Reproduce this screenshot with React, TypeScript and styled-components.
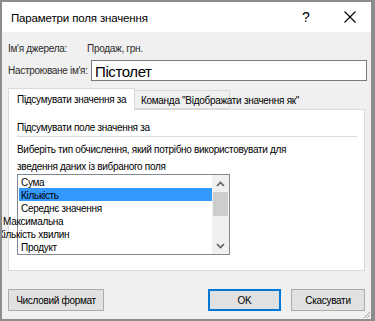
import React from 'react';
import styled, { createGlobalStyle } from 'styled-components';

const Global = createGlobalStyle`
  html, body { margin: 0; padding: 0; background: #f0f0f0; }
  body {
    font-family: "Liberation Sans", Arial, sans-serif;
    font-size: 10px;
    letter-spacing: -0.3px;
    white-space: nowrap;
    color: #000;
  }
`;

const Window = styled.div`
  box-sizing: border-box;
  width: 375px;
  height: 321px;
  border: 2px solid #8c8c8c;
  border-right-width: 4px;
  background: #f0f0f0;
  display: flex;
  flex-direction: column;
  position: relative;
  overflow: hidden;
`;

const TitleBar = styled.div`
  height: 30px;
  background: #fff;
  display: flex;
  align-items: center;
  padding-left: 9px;
  flex-shrink: 0;
`;

const Title = styled.div`
  flex: 1;
  font-size: 11.5px;
  letter-spacing: -0.15px;
  padding-top: 2px;
`;

const TitleButton = styled.div<{ $w: number }>`
  width: ${p => p.$w}px;
  height: 30px;
  display: flex;
  align-items: center;
  justify-content: center;
  font-size: 14px;
  letter-spacing: 0;
`;

const Body = styled.div`
  flex: 1;
  display: flex;
  flex-direction: column;
  padding: 0 6px;
`;

const InfoRow = styled.div<{ $h: number; $top?: number }>`
  display: flex;
  align-items: center;
  height: ${p => p.$h}px;
  padding-top: ${p => p.$top ?? 0}px;
  color: #2b2b2b;
`;

const Label = styled.div<{ $w: number }>`
  width: ${p => p.$w}px;
  flex-shrink: 0;
`;

const NameInput = styled.div`
  flex: 1;
  box-sizing: border-box;
  height: 21px;
  margin-right: -2px;
  border: 1px solid #7a7a7a;
  background: #fff;
  font-size: 15px;
  letter-spacing: -0.4px;
  color: #000;
  padding: 1px 0 0 3px;
  display: flex;
  align-items: center;
`;

const Tabs = styled.div`
  display: flex;
  align-items: flex-end;
  height: 21px;
  margin-top: 7px;
  position: relative;
  z-index: 1;
`;

const Tab = styled.div<{ $active?: boolean; $w: number }>`
  box-sizing: border-box;
  width: ${p => p.$w}px;
  height: ${p => (p.$active ? 22 : 19)}px;
  margin-bottom: ${p => (p.$active ? -1 : 0)}px;
  padding: ${p => (p.$active ? '0 0 0 8px' : '2px 0 0 6px')};
  display: flex;
  align-items: center;
  background: ${p => (p.$active ? '#fff' : '#f0f0f0')};
  border: 1px solid #d9d9d9;
  border-bottom: ${p => (p.$active ? 'none' : '1px solid #d9d9d9')};
  border-left: ${p => (p.$active ? '1px solid #d9d9d9' : 'none')};
`;

const Panel = styled.div`
  box-sizing: border-box;
  height: 162px;
  background: #fff;
  border: 1px solid #d9d9d9;
  padding: 12px 6px 0 8px;
  display: flex;
  flex-direction: column;
`;

const Heading = styled.div`
  line-height: 12px;
  padding-bottom: 2px;
  margin-right: 1px;
  border-bottom: 1px solid #dcdcdc;
`;

const Hint = styled.div`
  line-height: 17px;
  margin-top: 4px;
  margin-bottom: -1px;
`;

const ListBox = styled.div`
  box-sizing: border-box;
  width: 213px;
  height: 81px;
  border: 1px solid #828790;
  background: #fff;
  display: flex;
`;

const Items = styled.div`
  flex: 1;
  padding: 0 0 0 1px;
  display: flex;
  flex-direction: column;
`;

const Item = styled.div<{ $selected?: boolean; $shift?: number }>`
  height: 13px;
  line-height: 16px;
  padding-left: 2px;
  background: ${p => (p.$selected ? '#3399ff' : 'transparent')};
  transform: translateX(${p => p.$shift ?? 0}px);
`;

const ScrollBar = styled.div`
  width: 17px;
  background: #f0f0f0;
  display: flex;
  flex-direction: column;
  align-items: center;
`;

const Arrow = styled.div`
  height: 17px;
  width: 17px;
  display: flex;
  align-items: center;
  justify-content: center;
`;

const Thumb = styled.div`
  width: 15px;
  height: 24px;
  background: #cdcdcd;
`;

const Spacer = styled.div`
  flex: 1;
`;

const Footer = styled.div`
  display: flex;
  align-items: center;
  padding-top: 18px;
  gap: 10px;
`;

const Button = styled.div<{ $w: number; $primary?: boolean }>`
  box-sizing: border-box;
  width: ${p => p.$w}px;
  height: 22px;
  background: #e1e1e1;
  border: ${p => (p.$primary ? '2px solid #0078d7' : '1px solid #adadad')};
  display: flex;
  align-items: center;
  justify-content: center;
  padding-top: 1px;
`;

const Grip = styled.svg`
  position: absolute;
  right: 0;
  bottom: 0;
`;

const Chevron = ({ up }: { up?: boolean }) => (
  <svg width="9" height="6" viewBox="0 0 9 6">
    <path
      d={up ? 'M1 5 L4.5 1.5 L8 5' : 'M1 1 L4.5 4.5 L8 1'}
      fill="none"
      stroke="#606060"
      strokeWidth="1.6"
    />
  </svg>
);

export default function App() {
  return (
    <Window>
      <Global />
      <TitleBar>
        <Title>Параметри поля значення</Title>
        <TitleButton $w={46}>?</TitleButton>
        <TitleButton $w={42}>
          <svg width="12" height="12" viewBox="0 0 12 12">
            <path d="M0.5 0.5 L11.5 11.5 M11.5 0.5 L0.5 11.5" stroke="#000" strokeWidth="1.1" />
          </svg>
        </TitleButton>
      </TitleBar>
      <Body>
        <InfoRow $h={24} $top={4}>
          <Label $w={79}>Ім'я джерела:</Label>
          <div>Продаж, грн.</div>
        </InfoRow>
        <InfoRow $h={21}>
          <Label $w={83}>Настроюване ім'я:</Label>
          <NameInput>Пістолет</NameInput>
        </InfoRow>
        <Tabs>
          <Tab $active $w={127}>Підсумувати значення за</Tab>
          <Tab $w={95}>Команда "Відображати значення як"</Tab>
        </Tabs>
        <Panel>
          <Heading>Підсумувати поле значення за</Heading>
          <Hint>
            Виберіть тип обчислення, який потрібно використовувати для
            <br />
            зведення даних із вибраного поля
          </Hint>
          <ListBox>
            <Items>
              <Item>Сума</Item>
              <Item $selected>Кількість</Item>
              <Item>Середнє значення</Item>
              <Item $shift={-18}>Максимальна</Item>
              <Item $shift={-23}>Кількість хвилин</Item>
              <Item>Продукт</Item>
            </Items>
            <ScrollBar>
              <Arrow>
                <Chevron up />
              </Arrow>
              <Thumb />
              <Spacer />
              <Arrow>
                <Chevron />
              </Arrow>
            </ScrollBar>
          </ListBox>
        </Panel>
        <Footer>
          <Button $w={96}>Числовий формат</Button>
          <Spacer />
          <Button $w={73} $primary>OK</Button>
          <Button $w={74}>Скасувати</Button>
        </Footer>
      </Body>
      <Grip width="10" height="10" viewBox="0 0 10 10">
        <path d="M9 3 L3 9 M9 6 L6 9" stroke="#a0a0a0" strokeWidth="1" />
      </Grip>
    </Window>
  );
}
